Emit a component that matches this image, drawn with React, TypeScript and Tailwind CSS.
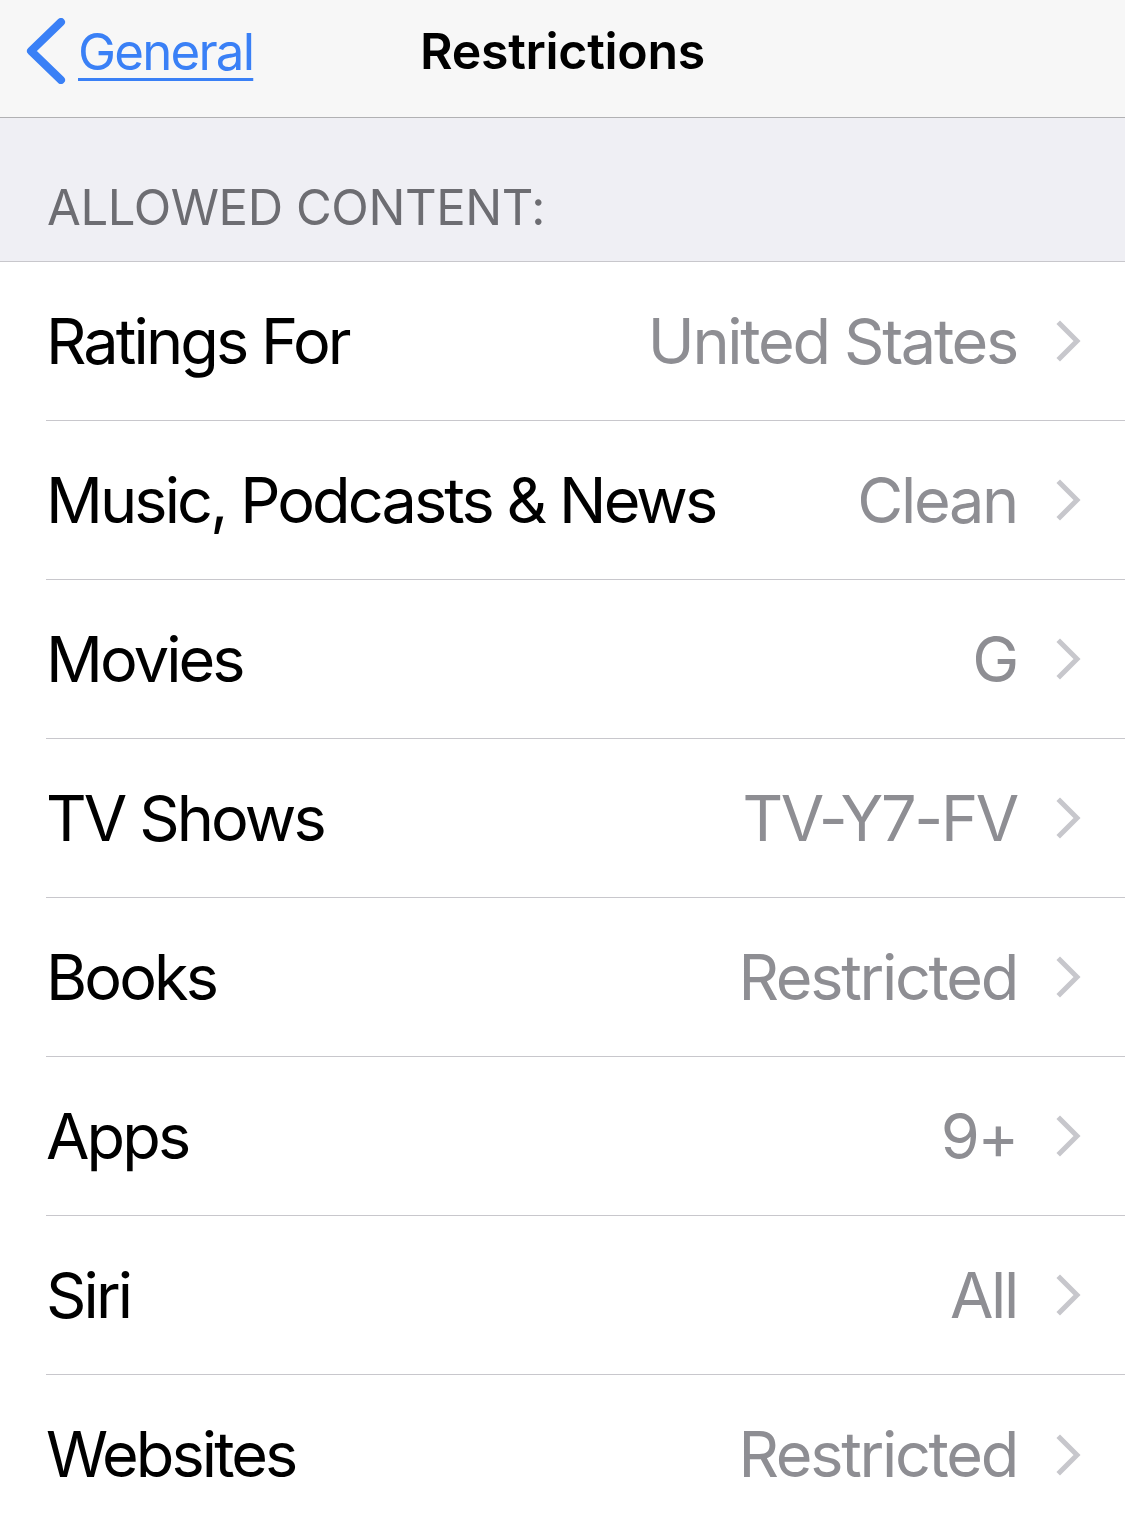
import React from "react";

const rows: { label: string; value: string }[] = [
  { label: "Ratings For", value: "United States" },
  { label: "Music, Podcasts & News", value: "Clean" },
  { label: "Movies", value: "G" },
  { label: "TV Shows", value: "TV-Y7-FV" },
  { label: "Books", value: "Restricted" },
  { label: "Apps", value: "9+" },
  { label: "Siri", value: "All" },
  { label: "Websites", value: "Restricted" },
];

function Chevron() {
  return (
    <svg width="26" height="42" viewBox="0 0 26 42" className="shrink-0">
      <path
        d="M4 4 L21 21 L4 38"
        fill="none"
        stroke="#c7c7cc"
        strokeWidth="5"
        strokeLinecap="square"
        strokeLinejoin="miter"
      />
    </svg>
  );
}

export default function App() {
  return (
    <div
      className="w-[1125px] h-[1530px] overflow-hidden bg-white"
      style={{ fontFamily: "Inter, 'Noto Sans', sans-serif" }}
    >
      {/* Nav bar */}
      <div className="h-[118px] bg-[#f7f7f7] border-b border-[#b1b1b3] relative">
        <div className="h-[102px] flex items-center pl-[25px]">
          <svg width="42" height="66" viewBox="0 0 42 66" className="shrink-0">
            <path
              d="M36 4 L6 33 L36 62"
              fill="none"
              stroke="#3a80f6"
              strokeWidth="8"
              strokeLinecap="round"
              strokeLinejoin="round"
            />
          </svg>
          <span className="ml-[11px] text-[51px] leading-none text-[#3a80f6] underline decoration-[3px] underline-offset-[8px] tracking-[-1.8px]">
            General
          </span>
        </div>
        <div className="absolute inset-x-0 top-0 h-[102px] flex items-center justify-center pointer-events-none">
          <span className="text-[50px] leading-none font-semibold text-black tracking-[-0.3px]">
            Restrictions
          </span>
        </div>
      </div>

      {/* Section header */}
      <div className="h-[144px] bg-[#efeff4] border-b border-[#c8c7cc] flex items-end pl-[47px] pb-[29px]">
        <span className="text-[49px] leading-none text-[#6d6d72] tracking-[-0.4px]">
          ALLOWED CONTENT:
        </span>
      </div>

      {/* Rows */}
      <div className="bg-white">
        {rows.map((r, i) => (
          <div key={i} className="pl-[46px]">
            <div
              className={
                "h-[159px] flex items-center pr-[43px] " +
                (i < rows.length - 1 ? "border-b border-[#c8c7cc]" : "")
              }
            >
              <span className="text-[63px] leading-none text-black tracking-[-2.9px] whitespace-nowrap">
                {r.label}
              </span>
              <span className="ml-auto text-[63px] leading-none text-[#8e8e93] tracking-[-2.3px] whitespace-nowrap">
                {r.value}
              </span>
              <div className="ml-[39px]">
                <Chevron />
              </div>
            </div>
          </div>
        ))}
      </div>
    </div>
  );
}
